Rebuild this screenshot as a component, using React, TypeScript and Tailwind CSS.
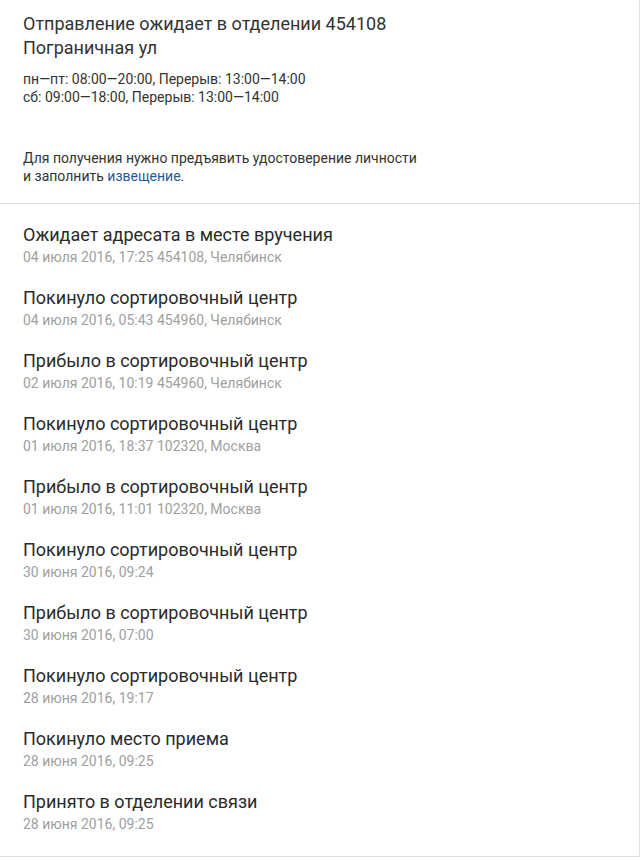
import React from "react";

const events: { title: string; date: string }[] = [
  { title: "Ожидает адресата в месте вручения", date: "04 июля 2016, 17:25 454108, Челябинск" },
  { title: "Покинуло сортировочный центр", date: "04 июля 2016, 05:43 454960, Челябинск" },
  { title: "Прибыло в сортировочный центр", date: "02 июля 2016, 10:19 454960, Челябинск" },
  { title: "Покинуло сортировочный центр", date: "01 июля 2016, 18:37 102320, Москва" },
  { title: "Прибыло в сортировочный центр", date: "01 июля 2016, 11:01 102320, Москва" },
  { title: "Покинуло сортировочный центр", date: "30 июня 2016, 09:24" },
  { title: "Прибыло в сортировочный центр", date: "30 июня 2016, 07:00" },
  { title: "Покинуло сортировочный центр", date: "28 июня 2016, 19:17" },
  { title: "Покинуло место приема", date: "28 июня 2016, 09:25" },
  { title: "Принято в отделении связи", date: "28 июня 2016, 09:25" },
];

export default function App() {
  return (
    <div className="w-[640px] bg-white font-['Roboto',sans-serif] text-[#333333] border-r border-b border-[#e0e0e0]">
      <section className="pl-[23px] pr-4 pt-[12px] pb-[18px] border-b border-[#e0e0e0]">
        <div className="text-[18px] leading-[24px]">
          <div>Отправление ожидает в отделении 454108</div>
          <div>Пограничная ул</div>
        </div>
        <div className="mt-[10px] text-[14px] leading-[18px]">
          <div>пн—пт: 08:00—20:00, Перерыв: 13:00—14:00</div>
          <div>сб: 09:00—18:00, Перерыв: 13:00—14:00</div>
        </div>
        <div className="mt-[43px] text-[14px] leading-[18px]">
          <div>Для получения нужно предъявить удостоверение личности</div>
          <div>
            и заполнить <span className="text-[#1f5c9e]">извещение</span>.
          </div>
        </div>
      </section>
      <section className="pl-[23px] pr-4 pt-[19px] pb-[23px] flex flex-col gap-[20px]">
        {events.map((e, i) => (
          <div key={i} className="flex flex-col">
            <div className="text-[18px] leading-[24px] text-[#2a2a2a]">{e.title}</div>
            <div className="mt-[1px] text-[14px] leading-[18px] text-[#a0a0a0]">{e.date}</div>
          </div>
        ))}
      </section>
    </div>
  );
}
